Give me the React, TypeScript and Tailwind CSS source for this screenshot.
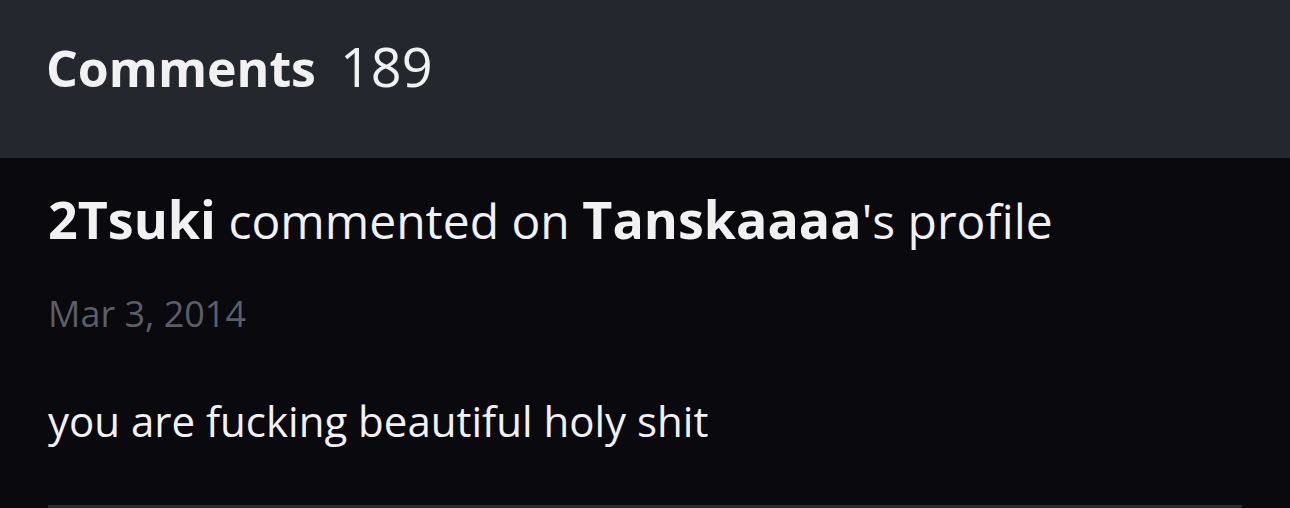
export default function App() {
  return (
    <div
      className="h-[508px] w-[1290px] overflow-hidden bg-[#09090e] text-[#f1f1f2]"
      style={{ fontFamily: '"Open Sans", "Noto Sans", sans-serif' }}
    >
      <header className="h-[158px] bg-[#24272d] px-[46px] pt-[39px]">
        <h2 className="text-[54px] leading-none">
          <span className="text-[50px] font-bold">Comments</span>
          <span className="ml-[24px] font-normal">189</span>
        </h2>
      </header>

      <div className="px-12 pt-[35px]">
        <p className="text-[52px] leading-none">
          <span className="font-bold">2Tsuki</span>
          <span className="text-[48px]"> commented on </span>
          <span className="font-bold">Tanskaaaa</span>
          <span className="text-[48px]">'s profile</span>
        </p>
        <p className="mt-[51px] text-[36px] leading-none text-[#5b5e69]">Mar 3, 2014</p>
        <p className="mt-[68px] text-[42px] leading-none">you are fucking beautiful holy shit</p>
        <div className="mt-[63px] border-t-[3px] border-[#2b2c31]" />
      </div>
    </div>
  );
}
